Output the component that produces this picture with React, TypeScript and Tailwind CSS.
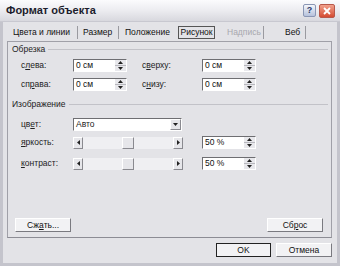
import React from 'react';

const FONT = { fontFamily: '"Liberation Sans", Arial, sans-serif' };

const U: React.FC<{ children: React.ReactNode }> = ({ children }) => (
  <span className="underline underline-offset-1">{children}</span>
);

const UpArrow = () => (
  <svg width="5" height="3" viewBox="0 0 5 3">
    <path d="M2.5 0 L5 3 L0 3 Z" fill="#222" />
  </svg>
);
const DownArrow = () => (
  <svg width="5" height="3" viewBox="0 0 5 3">
    <path d="M0 0 L5 0 L2.5 3 Z" fill="#222" />
  </svg>
);
const LeftArrow = () => (
  <svg width="3" height="5" viewBox="0 0 3 5">
    <path d="M3 0 L3 5 L0 2.5 Z" fill="#222" />
  </svg>
);
const RightArrow = () => (
  <svg width="3" height="5" viewBox="0 0 3 5">
    <path d="M0 0 L3 2.5 L0 5 Z" fill="#222" />
  </svg>
);

const SpinInput: React.FC<{ value: string }> = ({ value }) => (
  <div className="w-[54px] h-[13px] flex bg-white border-t border-l border-t-[#6e6e72] border-l-[#6e6e72] border-b border-r border-b-white border-r-white">
    <div className="flex-1 flex items-center pl-[2px] text-[8.5px] text-[#111]">{value}</div>
    <div className="w-[11px] flex flex-col">
      <div className="flex-1 flex items-center justify-center bg-[#e8e8ec] border-b border-[#b8b8be]">
        <UpArrow />
      </div>
      <div className="flex-1 flex items-center justify-center bg-[#e8e8ec]">
        <DownArrow />
      </div>
    </div>
  </div>
);

const ScrollBar: React.FC = () => (
  <div className="w-[110px] h-[12px] flex bg-[#efeff2]">
    <div className="w-[10px] flex items-center justify-center bg-[#e6e6ea] border-r border-b border-[#8a8a90] border-t border-l border-t-white border-l-white">
      <LeftArrow />
    </div>
    <div className="w-[39px]" />
    <div className="w-[12px] bg-[#e6e6ea] border-r border-b border-[#8a8a90] border-t border-l border-t-white border-l-white" />
    <div className="flex-1" />
    <div className="w-[10px] flex items-center justify-center bg-[#e6e6ea] border-r border-b border-[#8a8a90] border-t border-l border-t-white border-l-white">
      <RightArrow />
    </div>
  </div>
);

const Btn: React.FC<{ children: React.ReactNode; w: string; def?: boolean }> = ({ children, w, def }) => (
  <div
    className={`${w} h-[14px] flex items-center justify-center text-[8.5px] text-[#111] bg-[#f2f2f4] ${
      def
        ? 'border border-[#222]'
        : 'border-t border-l border-t-white border-l-white border-b border-r border-b-[#7a7a80] border-r-[#7a7a80]'
    }`}
  >
    {children}
  </div>
);

const GroupHeader: React.FC<{ title: string; mt: string }> = ({ title, mt }) => (
  <div className={`${mt} h-[14px] flex items-center pl-[4px] pr-[3px] gap-[3px]`}>
    <span className="text-[8.5px] text-[#222]">{title}</span>
    <div className="flex-1 border-t border-[#c2c2c8]" />
  </div>
);

export default function App() {
  return (
    <div className="w-[340px] h-[266px] bg-[#e3e3e7] flex flex-col overflow-hidden" style={FONT}>
      {/* title bar */}
      <div className="h-[22px] flex items-center bg-gradient-to-b from-[#fbfbfd] via-[#ececf0] to-[#d8d8de] border-b border-[#c8c8d0] pl-[6px] pr-[5px]">
        <span className="text-[11px] font-bold text-[#1c1c2c]">Формат объекта</span>
        <div className="flex-1" />
        <div className="w-[13px] h-[13px] mr-[3px] rounded-[2px] border border-[#8a96b4] bg-gradient-to-b from-[#f4f6fb] to-[#b6c2dc] flex items-center justify-center text-[9px] font-bold text-[#2a3a6a] leading-none">
          ?
        </div>
        <div className="w-[16px] h-[14px] rounded-[2px] border border-[#b8584a] bg-gradient-to-b from-[#f0a08c] to-[#d44a30] flex items-center justify-center">
          <svg width="8" height="8" viewBox="0 0 8 8">
            <path d="M1 1 L7 7 M7 1 L1 7" stroke="white" strokeWidth="1.8" />
          </svg>
        </div>
      </div>

      {/* body */}
      <div className="flex-1 flex flex-col border-l-[3px] border-r-[3px] border-b-[3px] border-[#c4c4cc]">
        {/* tabs */}
        <div className="mt-[2px] h-[16px] flex items-center text-[8.5px] text-[#111] pl-[4px]">
          <div className="w-[71px] h-[13px] flex items-center pl-[6px] border-r border-[#9a9aa0]">Цвета и линии</div>
          <div className="w-[41px] h-[13px] flex items-center pl-[5px] border-r border-[#9a9aa0]">Размер</div>
          <div className="w-[56px] h-[13px] flex items-center pl-[6px]">Положение</div>
          <div className="ml-[3px] w-[37px] h-[13px] flex items-center justify-center border border-[#555]">Рисунок</div>
          <div className="w-[49px] h-[13px] flex items-center pl-[12px] text-[#a8a8ae] border-r border-[#9a9aa0]">Надпись</div>
          <div className="w-[42px] h-[13px] flex items-center pl-[21px] border-r border-[#9a9aa0]">Веб</div>
        </div>

        {/* panel */}
        <div className="mt-[1px] ml-[4px] mr-[5px] h-[197px] flex flex-col border border-[#a0a0a8] border-b-[#8c8c94]">
          <GroupHeader title="Обрезка" mt="mt-0" />

          <div className="mt-[3px] h-[13px] flex items-center text-[8.5px] text-[#222]">
            <div className="w-[65px] pl-[13px]">с<U>л</U>ева:</div>
            <SpinInput value="0 см" />
            <div className="w-[75px] pl-[15px]">с<U>в</U>ерху:</div>
            <SpinInput value="0 см" />
          </div>
          <div className="mt-[6px] h-[13px] flex items-center text-[8.5px] text-[#222]">
            <div className="w-[65px] pl-[13px]">сп<U>р</U>ава:</div>
            <SpinInput value="0 см" />
            <div className="w-[75px] pl-[15px]">с<U>н</U>изу:</div>
            <SpinInput value="0 см" />
          </div>

          <GroupHeader title="Изображение" mt="mt-[6px]" />

          <div className="mt-[7px] h-[13px] flex items-center text-[8.5px] text-[#222]">
            <div className="w-[65px] pl-[13px]">цв<U>е</U>т:</div>
            <div className="w-[109px] h-[13px] flex bg-white border-t border-l border-t-[#6e6e72] border-l-[#6e6e72] border-b border-r border-b-white border-r-white">
              <div className="flex-1 flex items-center pl-[2px]">Авто</div>
              <div className="w-[11px] flex items-center justify-center bg-[#e6e6ea] border-r border-b border-[#8a8a90] border-t border-l border-t-white border-l-white">
                <DownArrow />
              </div>
            </div>
          </div>
          <div className="mt-[5px] h-[13px] flex items-center text-[8.5px] text-[#222]">
            <div className="w-[65px] pl-[13px]"><U>я</U>ркость:</div>
            <ScrollBar />
            <div className="w-[19px]" />
            <SpinInput value="50 %" />
          </div>
          <div className="mt-[8px] h-[13px] flex items-center text-[8.5px] text-[#222]">
            <div className="w-[65px] pl-[13px]"><U>к</U>онтраст:</div>
            <ScrollBar />
            <div className="w-[19px]" />
            <SpinInput value="50 %" />
          </div>

          <div className="flex-1" />
          <div className="mb-[5px] flex items-center pl-[7px] pr-[8px]">
            <Btn w="w-[56px]">Сж<U>а</U>ть...</Btn>
            <div className="flex-1" />
            <Btn w="w-[56px]">Сб<U>р</U>ос</Btn>
          </div>
        </div>

        {/* dialog buttons */}
        <div className="mt-[5px] flex items-center justify-end gap-[5px] pr-[5px]">
          <Btn w="w-[55px]" def>OK</Btn>
          <Btn w="w-[56px]">Отмена</Btn>
        </div>
      </div>
    </div>
  );
}
